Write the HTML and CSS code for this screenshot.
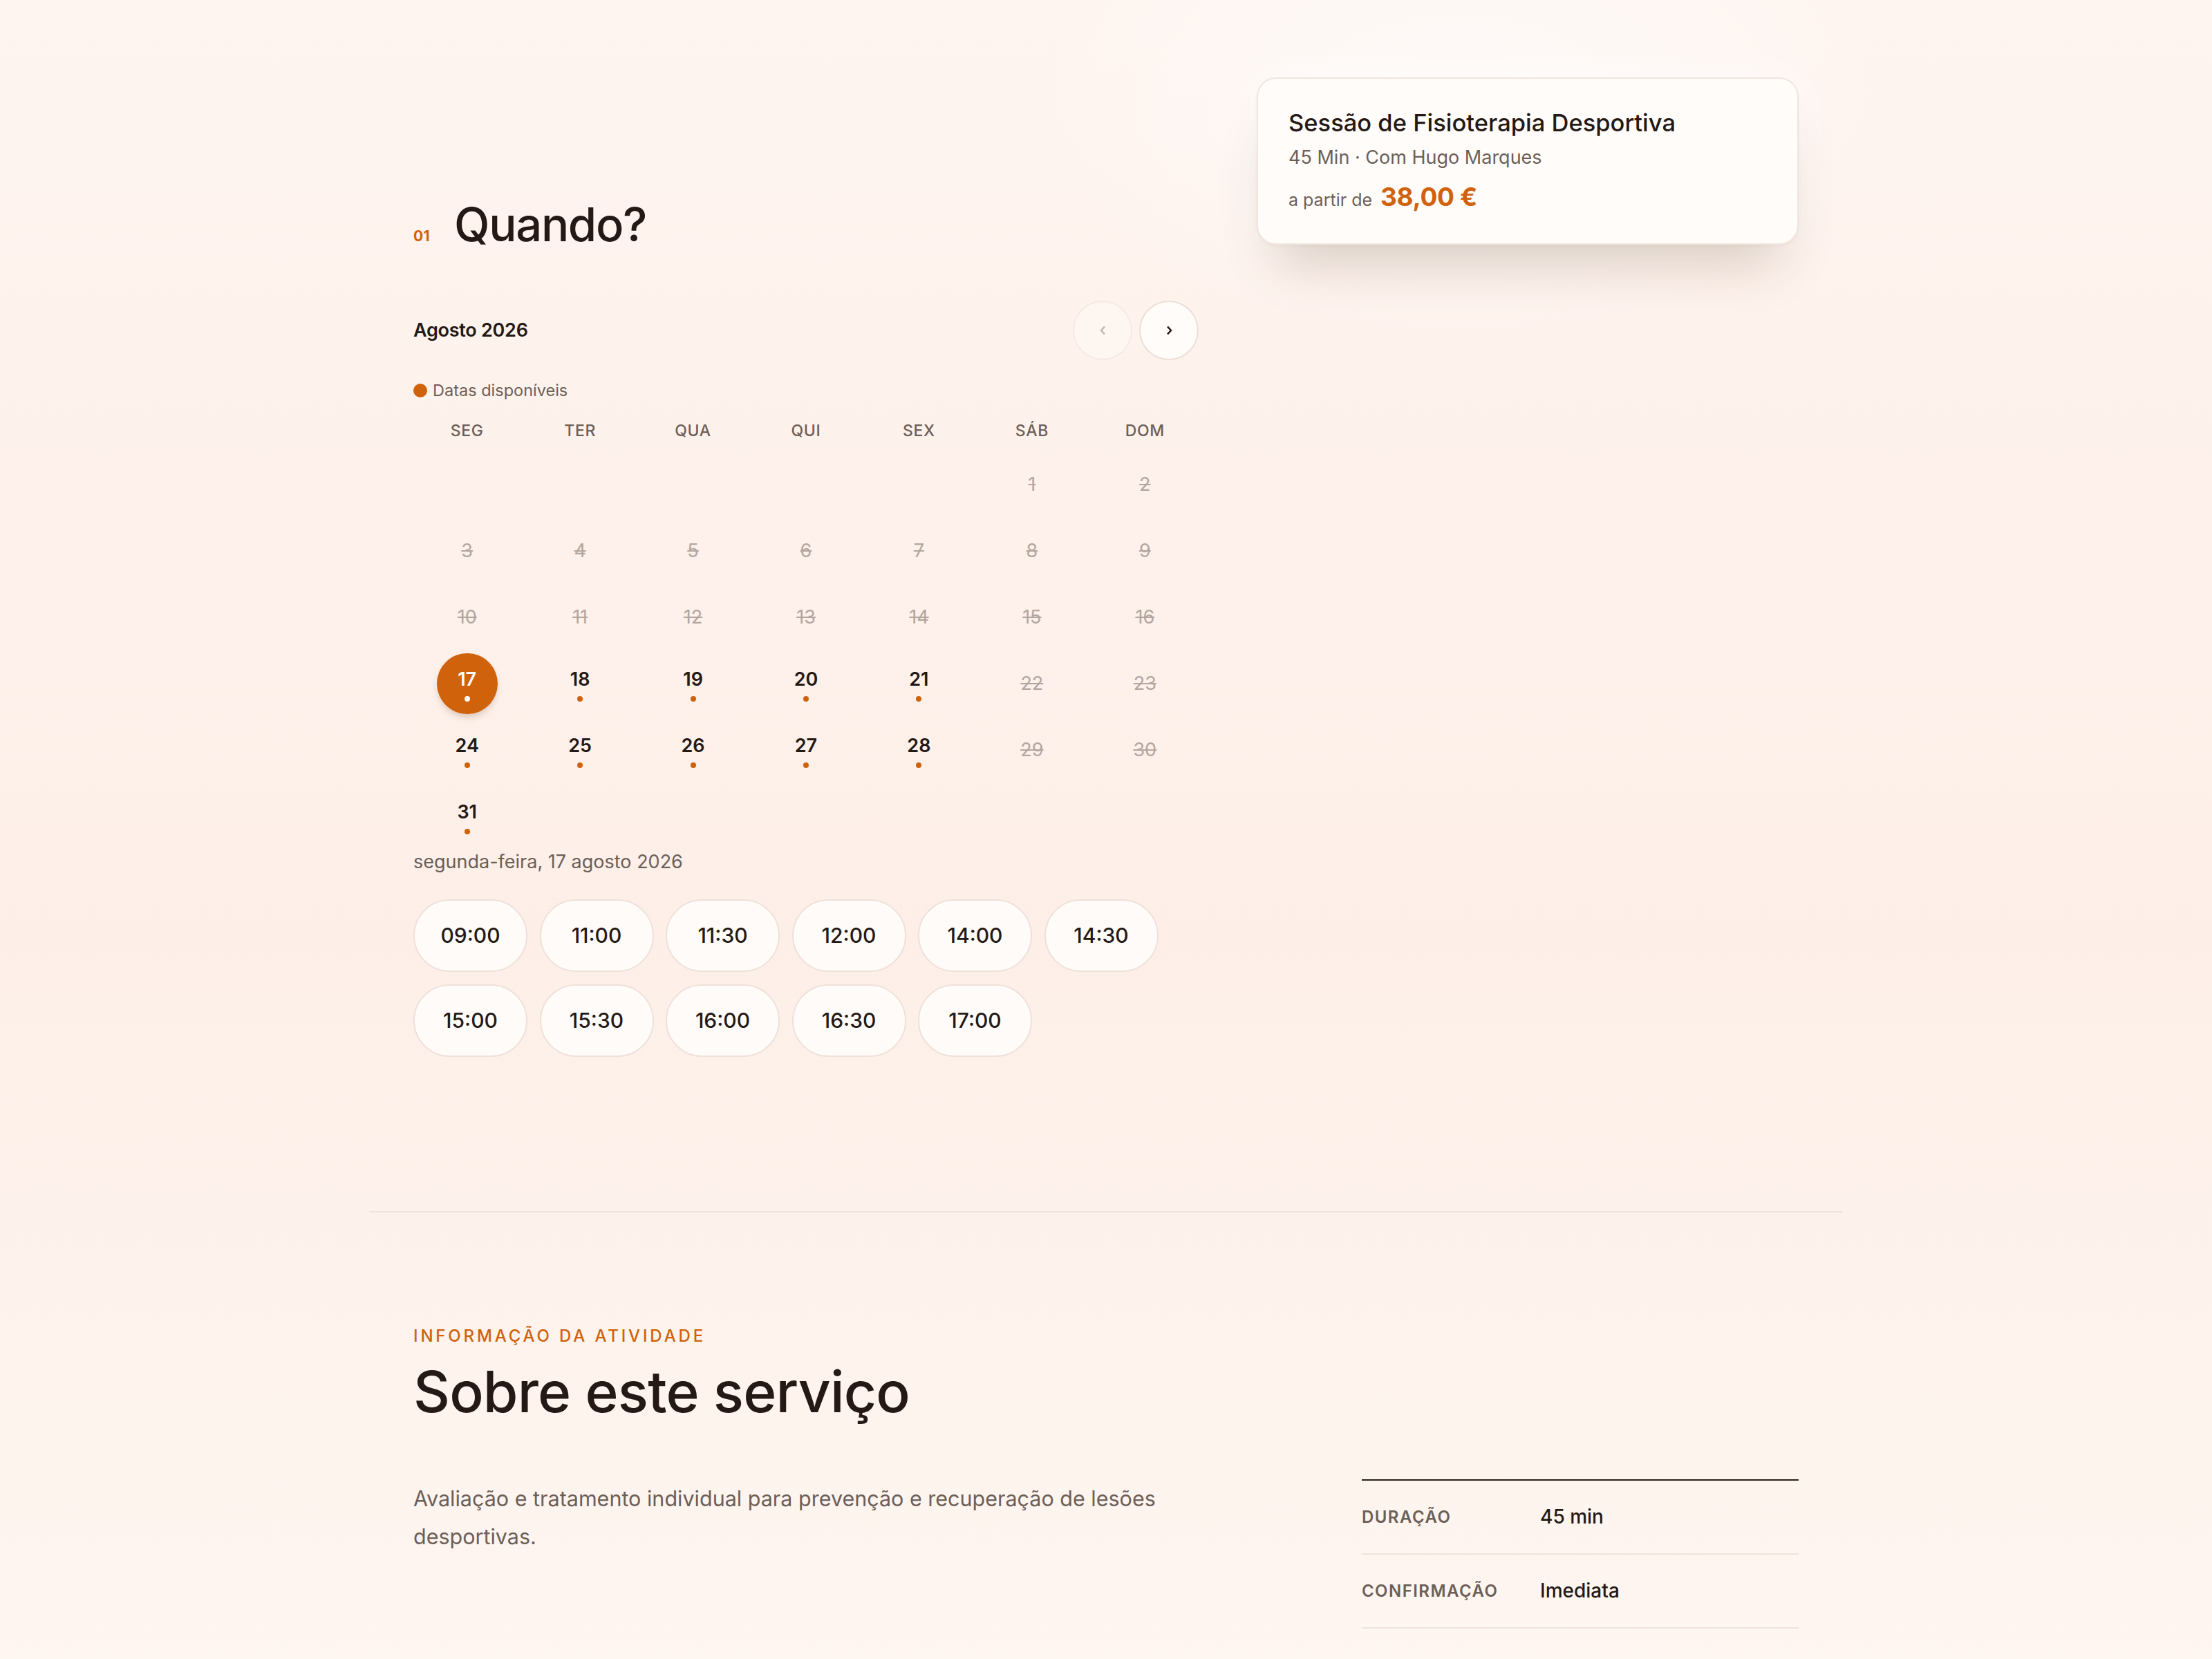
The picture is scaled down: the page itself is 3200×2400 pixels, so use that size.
FILE: index.html
```html
<!DOCTYPE html>
<html lang="pt">
<head>
<meta charset="utf-8">
<title>Sessão de Fisioterapia Desportiva</title>
<link rel="stylesheet" href="styles.css">
</head>
<body>
<section class="container booking">
  <div class="booking-main">
    <h1 class="step-title"><span class="step-num">01</span><span>Quando?</span></h1>

    <div class="cal-head">
      <span class="cal-month">Agosto 2026</span>
      <div class="cal-nav">
        <button type="button" class="nav-btn is-disabled" aria-label="Mês anterior">
          <svg width="9" height="14" viewBox="0 0 9 14"><path d="M7 1.5 L2 7 L7 12.5" fill="none" stroke="currentColor" stroke-width="2.6"/></svg>
        </button>
        <button type="button" class="nav-btn" aria-label="Mês seguinte">
          <svg width="9" height="14" viewBox="0 0 9 14"><path d="M2 1.5 L7 7 L2 12.5" fill="none" stroke="currentColor" stroke-width="2.6"/></svg>
        </button>
      </div>
    </div>

    <div class="legend"><span class="legend-dot"></span>Datas disponíveis</div>

    <div class="cal-weekdays">
      <span>SEG</span><span>TER</span><span>QUA</span><span>QUI</span><span>SEX</span><span>SÁB</span><span>DOM</span>
    </div>

    <div class="cal-days">
      <span class="day empty"></span>
      <span class="day empty"></span>
      <span class="day empty"></span>
      <span class="day empty"></span>
      <span class="day empty"></span>
      <span class="day off">1</span>
      <span class="day off">2</span>
      <span class="day off">3</span>
      <span class="day off">4</span>
      <span class="day off">5</span>
      <span class="day off">6</span>
      <span class="day off">7</span>
      <span class="day off">8</span>
      <span class="day off">9</span>
      <span class="day off">10</span>
      <span class="day off">11</span>
      <span class="day off">12</span>
      <span class="day off">13</span>
      <span class="day off">14</span>
      <span class="day off">15</span>
      <span class="day off">16</span>
      <span class="day avail selected">17</span>
      <span class="day avail">18</span>
      <span class="day avail">19</span>
      <span class="day avail">20</span>
      <span class="day avail">21</span>
      <span class="day off">22</span>
      <span class="day off">23</span>
      <span class="day avail">24</span>
      <span class="day avail">25</span>
      <span class="day avail">26</span>
      <span class="day avail">27</span>
      <span class="day avail">28</span>
      <span class="day off">29</span>
      <span class="day off">30</span>
      <span class="day avail">31</span>
    </div>

    <p class="sel-date">segunda-feira, 17 agosto 2026</p>

    <div class="slots">
      <button type="button" class="slot">09:00</button>
      <button type="button" class="slot">11:00</button>
      <button type="button" class="slot">11:30</button>
      <button type="button" class="slot">12:00</button>
      <button type="button" class="slot">14:00</button>
      <button type="button" class="slot">14:30</button>
      <button type="button" class="slot">15:00</button>
      <button type="button" class="slot">15:30</button>
      <button type="button" class="slot">16:00</button>
      <button type="button" class="slot">16:30</button>
      <button type="button" class="slot">17:00</button>
    </div>
  </div>

  <aside class="summary">
    <div class="summary-card">
      <h2 class="summary-title">Sessão de Fisioterapia Desportiva</h2>
      <p class="summary-meta">45 Min · Com Hugo Marques</p>
      <div class="summary-price">
        <span class="price-from">a partir de</span>
        <span class="price-value">38,00 €</span>
      </div>
    </div>
  </aside>
</section>

<div class="rule"></div>

<section class="container about">
  <p class="eyebrow">INFORMAÇÃO DA ATIVIDADE</p>
  <h2 class="about-title">Sobre este serviço</h2>
  <div class="about-grid">
    <p class="about-text">Avaliação e tratamento individual para prevenção e recuperação de lesões desportivas.</p>
    <dl class="facts">
      <div class="fact"><dt>DURAÇÃO</dt><dd>45 min</dd></div>
      <div class="fact"><dt>CONFIRMAÇÃO</dt><dd>Imediata</dd></div>
    </dl>
  </div>
</section>
</body>
</html>
```

FILE: styles.css
```css
:root {
  --ink: #241915;
  --muted: #6c5f58;
  --faint: #b2a69f;
  --orange: #cf620b;
  --line: #efe3dc;
  --card: #fffcf9;
}

* { box-sizing: border-box; }

html { background: #fef4ef; }

body {
  margin: 0;
  min-height: 2400px;
  font-family: Inter, "Noto Sans", sans-serif;
  color: var(--ink);
  background:
    radial-gradient(ellipse 900px 500px at 66% 6%, rgba(255, 255, 255, 0.55), rgba(255, 255, 255, 0) 70%),
    linear-gradient(180deg, #fef5f0 0%, #fef1eb 30%, #fdefe8 55%, #fef3ed 78%, #fef6f1 100%);
}

.container {
  width: 2004px;
  margin: 0 auto;
}

/* ---------- booking ---------- */
.booking {
  display: grid;
  grid-template-columns: 1fr 784px;
  column-gap: 80px;
  align-items: start;
  padding-top: 112px;
  padding-bottom: 223px;
}

.step-title {
  display: flex;
  align-items: baseline;
  gap: 35px;
  margin: 176px 0 0;
  font-size: 67px;
  line-height: 1.1;
  font-weight: 500;
  letter-spacing: -0.02em;
}

.step-num {
  font-size: 21px;
  font-weight: 700;
  color: var(--orange);
  letter-spacing: 0.02em;
}

.cal-head {
  display: flex;
  align-items: center;
  justify-content: space-between;
  margin-top: 73px;
}

.cal-month {
  font-size: 27px;
  font-weight: 600;
  letter-spacing: -0.01em;
}

.cal-nav {
  display: flex;
  gap: 10px;
  margin-right: 4px;
}

.nav-btn {
  width: 86px;
  height: 86px;
  padding: 0;
  border-radius: 50%;
  border: 2px solid #eddfd7;
  background: var(--card);
  color: var(--ink);
  display: grid;
  place-items: center;
}

.nav-btn.is-disabled {
  opacity: 0.4;
  color: #6c5f58;
}

.legend {
  display: flex;
  align-items: center;
  gap: 8px;
  margin-top: 28px;
  font-size: 23.5px;
  line-height: 32px;
  color: var(--muted);
}

.legend-dot {
  width: 20px;
  height: 20px;
  border-radius: 50%;
  background: var(--orange);
}

.cal-weekdays {
  display: grid;
  grid-template-columns: repeat(7, 1fr);
  margin: 26px 0 0 -4px;
  font-size: 23px;
  line-height: 32px;
  font-weight: 500;
  letter-spacing: 0.03em;
  color: var(--muted);
  text-align: center;
}

.cal-days {
  display: grid;
  grid-template-columns: repeat(7, 1fr);
  row-gap: 8px;
  margin: 18px 0 0 -4px;
}

.day {
  height: 88px;
  display: flex;
  flex-direction: column;
  align-items: center;
  justify-content: center;
  font-size: 27px;
  line-height: 28px;
}

.day.off {
  color: var(--faint);
  text-decoration: line-through;
  text-decoration-thickness: 2px;
}

.day.avail {
  padding-top: 6px;
  font-weight: 600;
  color: var(--ink);
}

.day.avail::after {
  content: "";
  width: 8px;
  height: 8px;
  margin-top: 10px;
  border-radius: 50%;
  background: var(--orange);
}

.day.selected {
  width: 88px;
  justify-self: center;
  border-radius: 50%;
  background: var(--orange);
  color: #fff;
  box-shadow: 0 6px 12px -4px rgba(90, 40, 10, 0.3);
}

.day.selected::after { background: #fff; }

.sel-date {
  margin: 4px 0 0;
  font-size: 27px;
  line-height: 36px;
  color: var(--muted);
}

.slots {
  display: flex;
  flex-wrap: wrap;
  column-gap: 17.5px;
  row-gap: 18px;
  margin-top: 36px;
}

.slot {
  width: 165px;
  height: 105px;
  padding: 0;
  border-radius: 999px;
  border: 2px solid #efe1d9;
  background: #fffbf8;
  font-family: Inter, "Noto Sans", sans-serif;
  font-size: 30px;
  font-weight: 500;
  color: var(--ink);
}

/* ---------- summary card ---------- */
.summary-card {
  background: var(--card);
  border: 2px solid #f1e5de;
  border-radius: 28px;
  padding: 42px 44px 45px;
  box-shadow:
    0 2px 4px rgba(80, 40, 10, 0.04),
    0 50px 80px -30px rgba(80, 40, 10, 0.24),
    0 0 60px rgba(255, 255, 255, 0.7);
}

.summary-title {
  margin: 0;
  font-size: 34.5px;
  line-height: 1.3;
  font-weight: 500;
}

.summary-meta {
  margin: 8px 0 0;
  font-size: 27px;
  line-height: 1.4;
  color: var(--muted);
}

.summary-price {
  display: flex;
  align-items: baseline;
  gap: 12px;
  margin-top: 16px;
}

.price-from {
  font-size: 25px;
  color: var(--muted);
}

.price-value {
  font-size: 37px;
  line-height: 1.2;
  font-weight: 700;
  color: var(--orange);
  letter-spacing: -0.01em;
}

/* ---------- divider ---------- */
.rule {
  width: 2132px;
  height: 2px;
  margin: 0 auto;
  background: #efe3dc;
}

/* ---------- about ---------- */
.about {
  padding-top: 163px;
  padding-bottom: 120px;
}

.eyebrow {
  margin: 0;
  font-size: 24px;
  line-height: 32px;
  font-weight: 500;
  letter-spacing: 0.16em;
  color: var(--orange);
}

.about-title {
  margin: 20px 0 0;
  font-size: 82px;
  line-height: 1.1;
  font-weight: 500;
  letter-spacing: -0.01em;
}

.about-grid {
  display: grid;
  grid-template-columns: 1fr 632px;
  column-gap: 120px;
  align-items: start;
  margin-top: 81px;
}

.about-text {
  margin: 0;
  max-width: 1100px;
  font-size: 30.5px;
  line-height: 55px;
  color: var(--muted);
}

.facts {
  margin: 0;
  border-top: 2px solid #2a1e19;
}

.fact {
  display: flex;
  align-items: center;
  height: 107px;
  border-bottom: 2px solid var(--line);
}

.fact dt {
  width: 258px;
  font-size: 24px;
  font-weight: 600;
  letter-spacing: 0.06em;
  color: var(--muted);
}

.fact dd {
  margin: 0;
  font-size: 28px;
  font-weight: 500;
  color: var(--ink);
}
```
